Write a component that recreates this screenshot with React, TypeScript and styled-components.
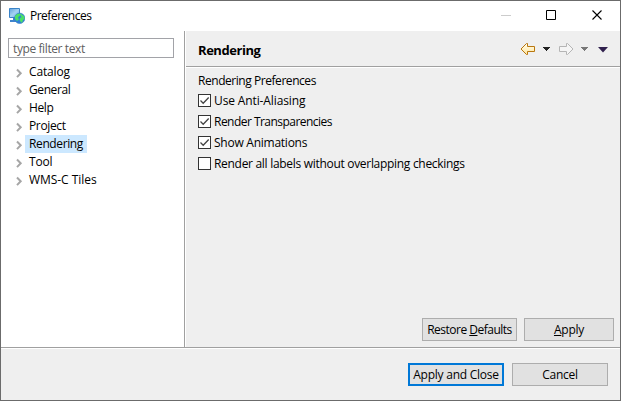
import React from "react";
import styled, { createGlobalStyle } from "styled-components";

const GlobalStyle = createGlobalStyle`
  * { box-sizing: border-box; }
  body { margin: 0; overflow: hidden; }
`;

const Window = styled.div`
  width: 621px;
  height: 401px;
  display: flex;
  flex-direction: column;
  border: 1px solid #6b6b6b;
  background: #efefef;
  color: #000;
  font: 12px/18px "Open Sans", "Noto Sans", sans-serif;
  white-space: nowrap;
  user-select: none;
`;

const Text = styled.span<{ $spacing?: number }>`
  letter-spacing: ${(p) => p.$spacing ?? -0.25}px;
`;

const TitleBar = styled.header`
  height: 30px;
  flex: none;
  display: flex;
  align-items: center;
  background: #fff;
  padding-left: 8px;
`;

const Title = styled(Text)`
  flex: 1;
  margin-left: 5px;
`;

const WindowButton = styled.div`
  width: 46px;
  height: 30px;
  svg { display: block; }
`;

const Body = styled.main`
  height: 316px;
  flex: none;
  display: flex;
`;

const Sidebar = styled.aside`
  width: 184px;
  flex: none;
  background: #fff;
  border-right: 1px solid #a0a0a0;
  padding: 7px 0 0 7px;
`;

const FilterInput = styled.input`
  display: block;
  width: 166px;
  height: 20px;
  margin-bottom: 5px;
  padding: 0 0 0 4px;
  border: 1px solid #a2a3a8;
  border-radius: 0;
  outline: none;
  background: #fff;
  font: inherit;
  letter-spacing: -0.4px;
  &::placeholder { color: #606060; opacity: 1; }
`;

const TreeItem = styled.div`
  height: 18px;
  display: flex;
  align-items: center;
  padding-left: 8px;
`;

const TreeLabel = styled(Text)<{ $selected: boolean }>`
  height: 18px;
  padding: 0 4px;
  line-height: 17px;
  background: ${(p) => (p.$selected ? "#cce8ff" : "transparent")};
`;

const Page = styled.section`
  flex: 1;
  display: flex;
  flex-direction: column;
  border-left: 1px solid #fff;
`;

const PageHeader = styled.div`
  height: 37px;
  display: flex;
  align-items: center;
  border-bottom: 1px solid #fff;
  box-shadow: inset 0 -1px #a0a0a0;
  padding-left: 12px;
`;

const PageTitle = styled.h1`
  flex: 1;
  margin: 0;
  padding-top: 1px;
  font-size: 13px;
  font-weight: 700;
  letter-spacing: -0.45px;
`;

const Options = styled.div`
  flex: 1;
  padding: 4px 0 0 12px;
`;

const OptionRow = styled.label`
  height: 21px;
  display: flex;
  align-items: center;
  gap: 3px;
`;

const OptionText = styled(Text)`
  padding-top: 1px;
`;

const Box = styled.span`
  width: 13px;
  height: 13px;
  border: 1px solid #333;
  background: #fff;
  svg { display: block; }
`;

const PageActions = styled.div`
  display: flex;
  justify-content: flex-end;
  gap: 7px;
  padding: 0 6px 6px 0;
`;

const Footer = styled.footer`
  flex: 1;
  display: flex;
  justify-content: flex-end;
  gap: 8px;
  border-top: 1px solid #a0a0a0;
  box-shadow: inset 0 1px #fff;
  padding: 15px 12px 0 0;
`;

const Button = styled.button<{ $width: number; $primary?: boolean; $spacing?: number }>`
  width: ${(p) => p.$width}px;
  height: 23px;
  padding: 1px 0 0;
  border: ${(p) => (p.$primary ? "2px solid #0078d7" : "1px solid #adadad")};
  border-radius: 0;
  background: #e1e1e1;
  color: #000;
  font: inherit;
  line-height: 18px;
  letter-spacing: ${(p) => p.$spacing ?? -0.25}px;
`;

const Mnemonic = styled.span`
  text-decoration: underline;
  text-decoration-thickness: 1px;
  text-underline-offset: 1px;
`;

const AppIcon = () => (
  <svg width="16" height="16" viewBox="0 0 16 16">
    <defs>
      <linearGradient id="screen" x1="0" y1="0" x2="1" y2="1">
        <stop offset="0" stopColor="#5f9fdc" />
        <stop offset=".5" stopColor="#a5d2f2" />
        <stop offset="1" stopColor="#5fa6e6" />
      </linearGradient>
    </defs>
    <path d="M.5 .5h10v9H.5z" fill="url(#screen)" stroke="#3983c8" />
    <path d="M4 10h4v2H4zM1 12h8v2H1z" fill="#3f83cc" />
    <circle cx="10.700" cy="10.300" r="5.200" fill="#2f80d8" stroke="#3b80c0" strokeWidth=".6" />
    <path d="M6 8l2-2 3-.5 1 1-2 2-1 1 1 2-2 1.500-2-2zM12 6l3 2 .7 3-1.700 1-1 3-2-2-.5-2 1-1.500 1 0-1-2z" fill="#4be066" />
  </svg>
);

const Chevron = () => (
  <svg width="9" height="18" viewBox="0 0 9 18">
    <path d="M1 6.500L4.700 10.300L1 14.100" fill="none" stroke="#a6a6a6" strokeWidth="2" />
  </svg>
);

const NavIcons = () => (
  <svg width="100" height="20" viewBox="520 39 100 20">
    <defs>
      <linearGradient id="gold" x1="0" y1="0" x2="0" y2="1">
        <stop offset="0" stopColor="#fffdf0" />
        <stop offset="1" stopColor="#ffe59b" />
      </linearGradient>
    </defs>
    <path d="M521 49L526.500 43.500H527.500V46.500H534.500V51.500H527.500V54.500H526.500Z" fill="url(#gold)" stroke="#b9770e" strokeLinejoin="round" />
    <path d="M543 47h7v1h-1v1h-1v1h-1v1h-1v-1h-1v-1h-1v-1h-1z" fill="#222" />
    <path d="M573 49L567.500 43.500H566.500V46.500H559.500V51.500H566.500V54.500H567.500Z" fill="#f5f5f5" stroke="#b5b5b5" strokeLinejoin="round" />
    <path d="M581 47h7v1h-1v1h-1v1h-1v1h-1v-1h-1v-1h-1v-1h-1z" fill="#777" />
    <path d="M598 47h10L603 52.500Z" fill="#30204d" />
  </svg>
);

const tree: { name: string; spacing: number }[] = [
  { name: "Catalog", spacing: -0.15 },
  { name: "General", spacing: -0.4 },
  { name: "Help", spacing: -0.4 },
  { name: "Project", spacing: -0.35 },
  { name: "Rendering", spacing: -0.38 },
  { name: "Tool", spacing: -0.15 },
  { name: "WMS-C Tiles", spacing: -0.05 },
];

const options = [
  { label: "Use Anti-Aliasing", checked: true, spacing: -0.12 },
  { label: "Render Transparencies", checked: true, spacing: -0.53 },
  { label: "Show Animations", checked: true, spacing: -0.25 },
  { label: "Render all labels without overlapping checkings", checked: false, spacing: -0.3 },
];

export default function App() {
  return (
    <>
      <GlobalStyle />
      <Window>
        <TitleBar>
          <AppIcon />
          <Title $spacing={-0.5}>Preferences</Title>
          <WindowButton>
            <svg width="46" height="30"><path d="M19 14.500h10" stroke="#ccc" /></svg>
          </WindowButton>
          <WindowButton>
            <svg width="46" height="30"><path d="M18.500 9.500h9v9h-9z" fill="none" stroke="#000" /></svg>
          </WindowButton>
          <WindowButton>
            <svg width="46" height="30"><path d="M18.500 9.500l9 9m0-9l-9 9" stroke="#000" strokeWidth="1.100" /></svg>
          </WindowButton>
        </TitleBar>
        <Body>
          <Sidebar>
            <FilterInput placeholder="type filter text" />
            {tree.map((item) => (
              <TreeItem key={item.name}>
                <Chevron />
                <TreeLabel $selected={item.name === "Rendering"} $spacing={item.spacing}>{item.name}</TreeLabel>
              </TreeItem>
            ))}
          </Sidebar>
          <Page>
            <PageHeader>
              <PageTitle>Rendering</PageTitle>
              <NavIcons />
            </PageHeader>
            <Options>
              <Text $spacing={-0.45}>Rendering Preferences</Text>
              {options.map((o) => (
                <OptionRow key={o.label}>
                  <Box>
                    {o.checked && (
                      <svg width="11" height="11"><path d="M1.500 5.500l2.700 2.700L9.700 2.500" fill="none" stroke="#444" strokeWidth="1.300" /></svg>
                    )}
                  </Box>
                  <OptionText $spacing={o.spacing}>{o.label}</OptionText>
                </OptionRow>
              ))}
            </Options>
            <PageActions>
              <Button $width={95} $spacing={-0.5}>Restore <Mnemonic>D</Mnemonic>efaults</Button>
              <Button $width={90}><Mnemonic>A</Mnemonic>pply</Button>
            </PageActions>
          </Page>
        </Body>
        <Footer>
          <Button $width={96} $primary>Apply and Close</Button>
          <Button $width={96}>Cancel</Button>
        </Footer>
      </Window>
    </>
  );
}
